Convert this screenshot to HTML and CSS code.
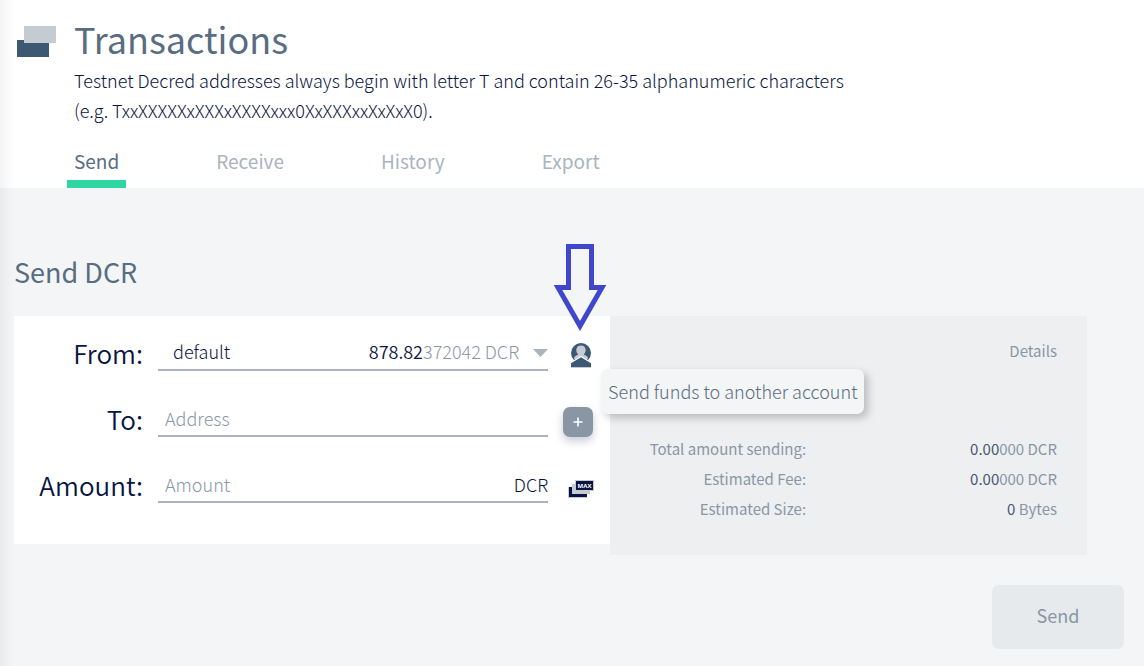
FILE: index.html
```html
<!DOCTYPE html>
<html lang="en">
<head>
  <meta charset="UTF-8">
  <meta name="viewport" content="width=device-width, initial-scale=1.0">
  <title>Transactions</title>
  <link rel="stylesheet" href="styles.css">
</head>
<body>
  <header class="page-header">
    <svg class="page-icon" viewBox="0 0 39 31" aria-hidden="true">
      <rect y="14" width="32" height="17" fill="#3d5873"/>
      <rect x="7" width="32" height="17" fill="#c4cbd2"/>
    </svg>
    <div class="page-intro">
      <h1>Transactions</h1>
      <p>Testnet Decred addresses always begin with letter T and contain 26-35 alphanumeric characters (e.g. TxxXXXXXxXXXxXXXXxxx0XxXXXxxXxXxX0).</p>
    </div>
  </header>

  <nav class="tabs">
    <a class="tab active" href="#send">Send</a>
    <a class="tab" href="#receive">Receive</a>
    <a class="tab" href="#history">History</a>
    <a class="tab" href="#export">Export</a>
  </nav>

  <main class="content" id="send">
    <h2>Send DCR</h2>
    <form id="sendForm">
      <div class="panels">
        <div class="send-card">
          <div class="form-row">
            <label for="account">From:</label>
            <div class="field">
              <select id="account">
                <option>default</option>
              </select>
              <div class="balance"><span><b>878.82</b>372042 DCR</span>
                <svg width="15" height="8" viewBox="0 0 15 8" aria-hidden="true"><path d="M0 0h15L7.500 8z" fill="#a9b4bf"/></svg>
              </div>
            </div>
            <div class="action">
              <button type="button" class="icon-button" aria-label="Send funds to another account" aria-describedby="accountTip">
                <svg width="20" height="25" viewBox="0 0 20 25" aria-hidden="true">
                  <circle cx="10" cy="10" r="10" fill="#3d5873"/>
                  <path d="M10 2.500c3 0 4.700 2 4.700 4.600 0 1.800-.7 3.200-1.700 4.100 0 1.200 4 1.200 4 4.300L14.500 18h-9L3 15.500c0-3.100 4-3.100 4-4.300-1-.9-1.700-2.300-1.700-4.100 0-2.600 1.700-4.600 4.700-4.600z" fill="#c4cbd2"/>
                  <path d="M-1 19.500L10 12.800l11 6.700V26H-1z" fill="#fff"/>
                  <path d="M0 20.300l10-6 10 6V24H0z" fill="#3d5873"/>
                  <path d="M0 24h20v1H0z" fill="#c4cbd2"/>
                </svg>
              </button>
              <svg class="pointer-arrow" viewBox="0 0 54 88" aria-hidden="true">
                <path d="M15.500 3.500h23v41H49L27 83 5 44.500h10.500z" fill="none" stroke="#3f48cc" stroke-width="5"/>
              </svg>
              <span class="tooltip" id="accountTip" role="tooltip">Send funds to another account</span>
            </div>
          </div>

          <div class="form-row">
            <label for="address">To:</label>
            <div class="field">
              <input type="text" id="address" placeholder="Address">
            </div>
            <button type="button" class="add-button" aria-label="Add output">
              <svg width="10" height="10" viewBox="0 0 10 10" aria-hidden="true"><path d="M5 .5v9M.5 5h9" stroke="#fff" stroke-width="1.600"/></svg>
            </button>
          </div>

          <div class="form-row">
            <label for="amount">Amount:</label>
            <div class="field">
              <input type="text" id="amount" placeholder="Amount">
              <span class="unit">DCR</span>
            </div>
            <button type="button" class="icon-button" aria-label="Send all funds">
              <svg width="26" height="18" viewBox="0 0 26 18" aria-hidden="true">
                <path d="M0 7h19v11H0z" fill="#c4cbd2"/>
                <path d="M1 7h18v10H1z" fill="#091440"/>
                <path d="M4 4h18v10H4z" fill="#c4cbd2"/>
                <path d="M7 0h19v11H7z" fill="#c4cbd2"/>
                <path d="M8 1h17v9H8z" fill="#091440"/>
                <text class="max-text" x="16.500" y="8" text-anchor="middle">MAX</text>
              </svg>
            </button>
          </div>
        </div>

        <section class="details">
          <h3>Details</h3>
          <dl>
            <dt>Total amount sending:</dt>
            <dd><b>0.00</b>000 DCR</dd>
            <dt>Estimated Fee:</dt>
            <dd><b>0.00</b>000 DCR</dd>
            <dt>Estimated Size:</dt>
            <dd><b>0</b> Bytes</dd>
          </dl>
        </section>
      </div>

      <div class="form-footer">
        <button type="submit" class="send-button" disabled>Send</button>
      </div>
    </form>
  </main>
</body>
</html>
```

FILE: styles.css
```css
* {
  box-sizing: border-box;
}

body {
  margin: 0;
  background-color: #f3f5f6;
  color: #091440;
  font-family: "Noto Sans CJK SC", "Noto Sans", sans-serif;
  font-size: 18px;
  font-weight: 300;
  line-height: 30px;
}

/* shadow cast by the sidebar */
body::before {
  content: "";
  position: fixed;
  top: 0;
  bottom: 0;
  left: 0;
  width: 14px;
  background: linear-gradient(to right, rgba(0, 0, 0, 0.04), rgba(0, 0, 0, 0));
  z-index: 1;
}

h1,
h2,
h3,
p,
dl,
dd {
  margin: 0;
}

input,
select,
button {
  padding: 0;
  border: 0;
  border-radius: 0;
  background: none;
  color: inherit;
  font: inherit;
}

/* header */
.page-header {
  display: flex;
  align-items: flex-start;
  gap: 18px;
  padding: 17px 17px 0;
  background-color: #fff;
}

.page-icon {
  flex: none;
  width: 39px;
  height: 31px;
  margin-top: 9px;
}

.page-intro {
  max-width: 800px;
}

h1 {
  margin-bottom: 6px;
  color: #596d81;
  font-size: 36px;
  font-weight: 400;
  line-height: 42px;
}

/* tabs */
.tabs {
  display: flex;
  gap: 83px;
  padding: 21px 17px 0 67px;
  background-color: #fff;
}

.tab {
  padding: 0 7px 4px;
  border-bottom: 8px solid transparent;
  color: #a9b4bf;
  font-size: 19px;
  font-weight: 400;
  text-decoration: none;
}

.tab.active {
  border-color: #2ed6a1;
  color: #596d81;
}

/* send form */
.content {
  padding: 64px 20px 17px 14px;
}

h2 {
  margin-bottom: 24px;
  color: #596d81;
  font-size: 27px;
  font-weight: 400;
  line-height: 40px;
}

.panels {
  display: grid;
  grid-template-columns: 5fr 4fr;
  align-items: start;
  padding-right: 37px;
}

.send-card {
  display: flex;
  flex-direction: column;
  gap: 28px;
  padding: 17px 11px 41px 0;
  background-color: #fff;
}

.form-row {
  display: grid;
  grid-template-columns: 129px 1fr 36px;
  column-gap: 15px;
  align-items: center;
}

label {
  padding-top: 2px;
  font-size: 26px;
  font-weight: 350;
  line-height: 36px;
  text-align: right;
}

.field {
  display: grid;
  height: 38px;
  border-bottom: 2px solid #a9b4bf;
}

.field > * {
  grid-area: 1 / 1;
  width: 100%;
}

.field select {
  padding-left: 15px;
  appearance: none;
}

.field input {
  padding: 2px 7px 0;
}

.field input::placeholder {
  color: #8997a5;
  opacity: 1;
}

.balance {
  display: flex;
  justify-content: flex-end;
  align-items: center;
  gap: 14px;
  color: #8997a5;
  pointer-events: none;
}

.balance svg {
  margin-top: 3px;
}

.balance b {
  color: #091440;
  font-weight: 350;
}

.unit {
  padding-top: 4px;
  text-align: right;
  pointer-events: none;
}

.action {
  position: relative;
}

.icon-button {
  display: flex;
  justify-content: center;
  align-items: center;
  width: 36px;
  height: 28px;
  margin-top: 10px;
  cursor: pointer;
}

.action .icon-button {
  align-items: flex-start;
}

.add-button {
  display: flex;
  justify-content: center;
  align-items: center;
  width: 30px;
  height: 30px;
  margin-top: 8px;
  border-radius: 7px;
  background-color: #8997a5;
  box-shadow: 0 4px 8px rgba(9, 20, 64, 0.22);
  cursor: pointer;
}

.max-text {
  fill: #fff;
  font-family: "Open Sans", sans-serif;
  font-size: 6px;
  font-weight: 700;
}

.tooltip {
  position: absolute;
  top: 36px;
  left: 38px;
  padding: 7px 7px 8px;
  border-radius: 7px;
  background-color: #f3f5f6;
  box-shadow: 4px 4px 8px rgba(0, 0, 0, 0.22);
  color: #596d81;
  white-space: nowrap;
  z-index: 2;
}

.pointer-arrow {
  position: absolute;
  bottom: 40px;
  left: -10px;
  width: 54px;
  height: 88px;
}

/* details */
.details {
  padding: 20px 30px 31px 0;
  background-color: #edeff1;
  color: #8997a5;
  font-size: 15px;
}

.details h3 {
  margin-bottom: 68px;
  font-size: 15px;
  font-weight: 400;
  text-align: right;
}

.details dl {
  display: grid;
  grid-template-columns: 196px 1fr;
  font-weight: 400;
  text-align: right;
}

.details b {
  color: #48566f;
  font-weight: 400;
}

.form-footer {
  display: flex;
  justify-content: flex-end;
  padding-top: 30px;
}

.send-button {
  width: 132px;
  height: 64px;
  padding-bottom: 4px;
  border-radius: 7px;
  background-color: #e6eaed;
  color: #8997a5;
  font-weight: 400;
}
```
